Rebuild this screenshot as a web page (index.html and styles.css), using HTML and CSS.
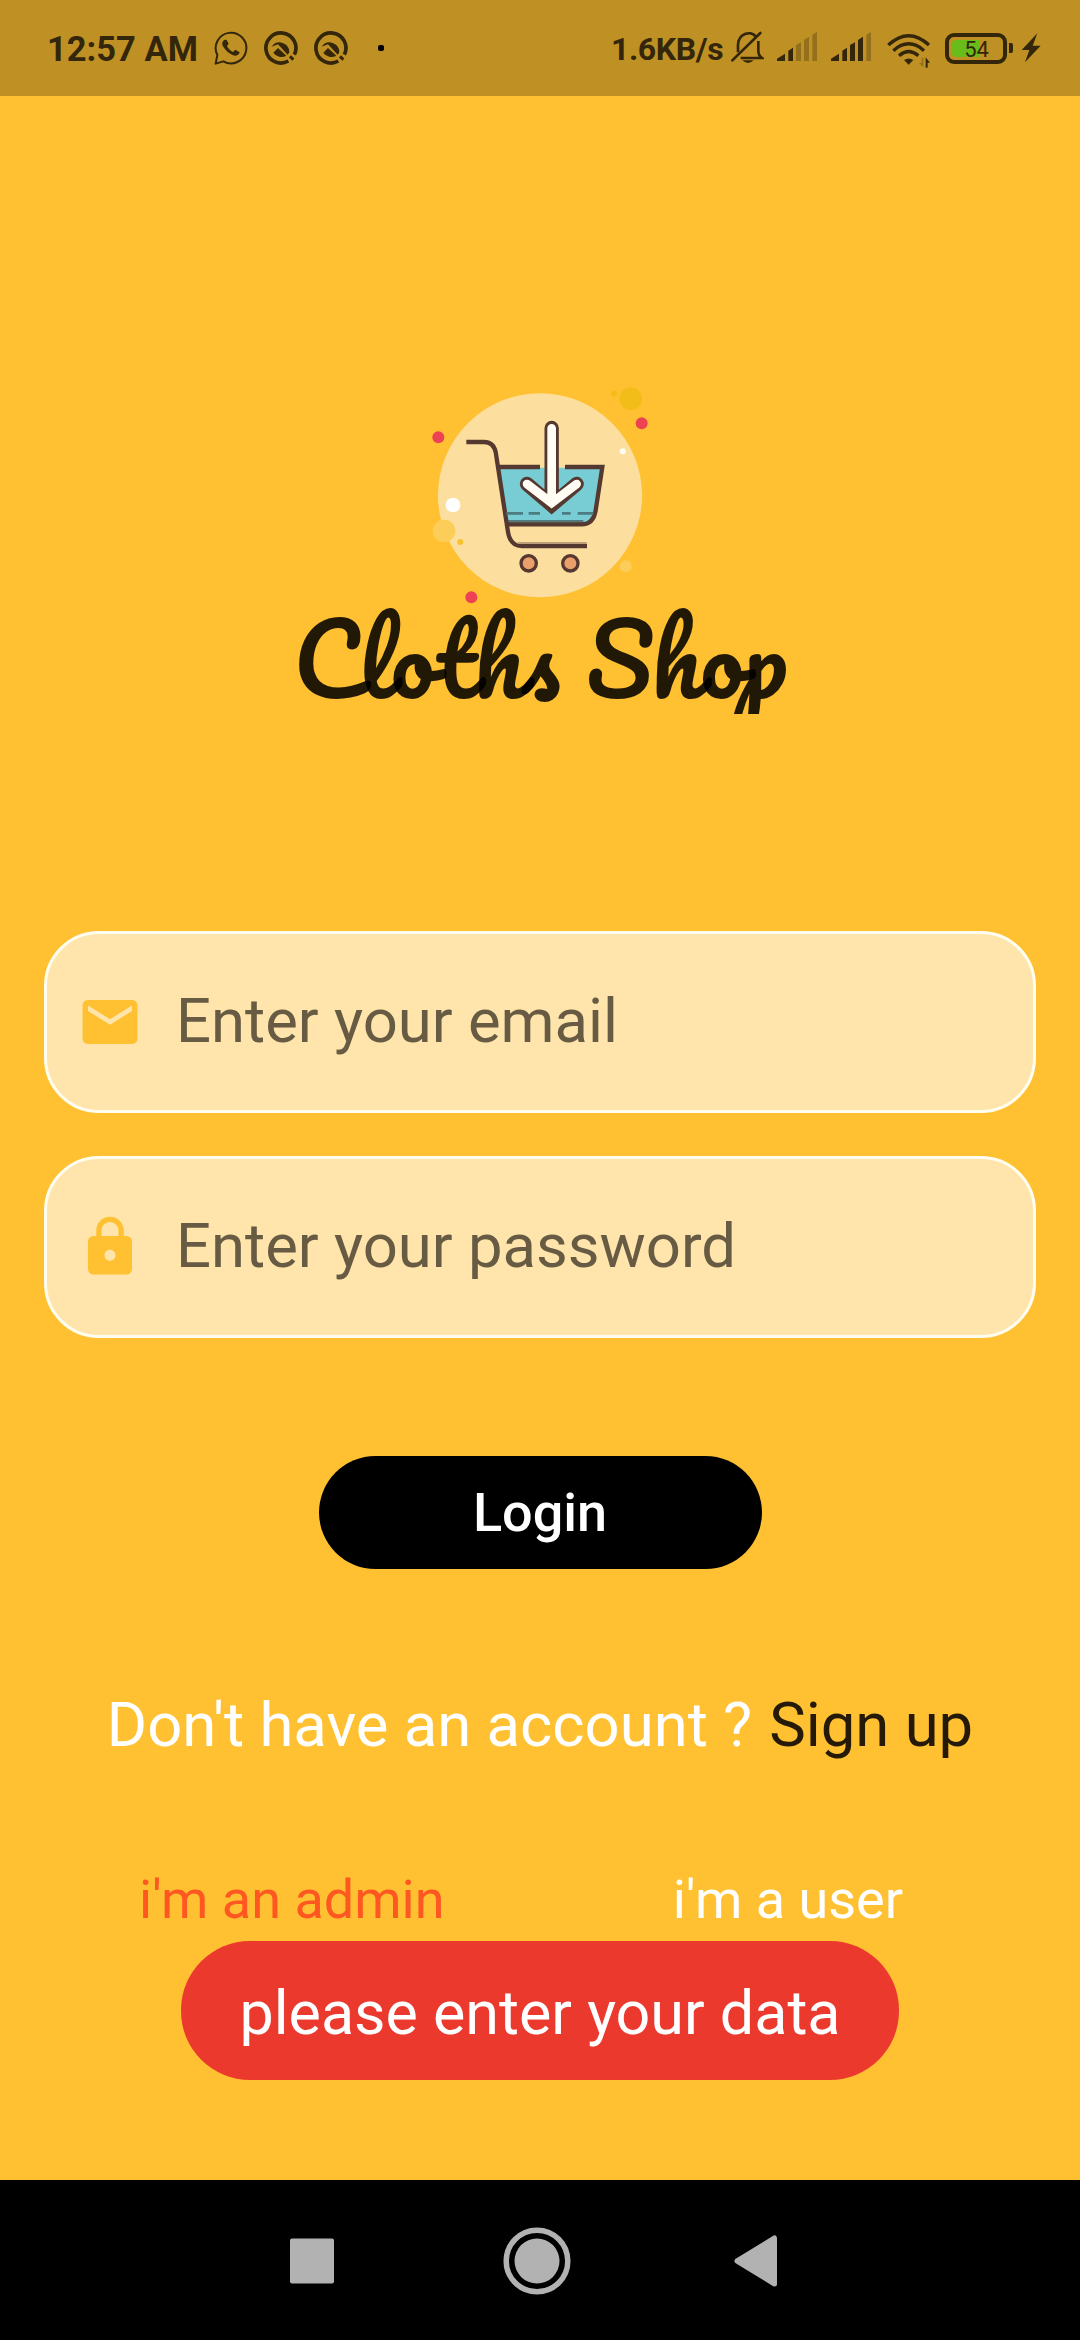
FILE: index.html
```html
<!DOCTYPE html>
<html lang="en">
<head>
<meta charset="utf-8">
<title>Cloths Shop</title>
<link rel="stylesheet" href="styles.css">
</head>
<body>
<div class="screen">
  <header class="status">
    <span class="clock">12:57 AM</span>
    <svg class="s-whatsapp" width="34" height="34" viewBox="0 0 102 102" fill="none" stroke="#33260a" stroke-width="6">
      <path d="M5 98L10 72A46 46 0 1 1 28 91Z" stroke-linejoin="round"/>
      <path d="M28 29C23 34 24 42 29 49C37 62 50 72 63 74C70 75 76 70 77 64L64 56L57 63C50 60 42 52 39 45L44 38L38 27C34 25 30 26 28 29Z" fill="#33260a" stroke="none"/>
    </svg>
    <svg class="s-app" width="34" height="34" viewBox="0 0 102 102" fill="none" stroke="#33260a">
      <path d="M73 90A45 45 0 1 1 91 71" stroke-width="11"/>
      <path d="M78 76L88 86" stroke-width="9"/>
      <path d="M23 47A29 29 0 0 1 76 64L71 71L42 40Z" fill="#33260a" stroke="none"/>
      <path d="M28 65L42 51L67 74A29 29 0 0 1 28 65Z" fill="#33260a" stroke="none"/>
    </svg>
    <svg class="s-app" width="34" height="34" viewBox="0 0 102 102" fill="none" stroke="#33260a">
      <path d="M73 90A45 45 0 1 1 91 71" stroke-width="11"/>
      <path d="M78 76L88 86" stroke-width="9"/>
      <path d="M23 47A29 29 0 0 1 76 64L71 71L42 40Z" fill="#33260a" stroke="none"/>
      <path d="M28 65L42 51L67 74A29 29 0 0 1 28 65Z" fill="#33260a" stroke="none"/>
    </svg>
    <i class="s-dot"></i>
    <span class="speed">1.6KB/s</span>
    <svg class="s-bell" width="34" height="34" viewBox="0 0 102 102" fill="none" stroke="#33260a" stroke-width="8">
      <path d="M7 88L91 6" stroke-linecap="round"/>
      <path d="M24 64V43C24 8 62 -3 77 16M85 30V60Q85 73 96 81H32"/>
      <path d="M37 88H71Q54 104 37 88Z" fill="#33260a" stroke="none"/>
    </svg>
    <svg class="s-signal" width="42" height="32" viewBox="0 0 126 96" fill="#33260a">
      <path d="M3 87V80L27 65V87ZM37 87V56L51 47V87Z"/>
      <path d="M60 87V39L75 31V87ZM84 87V24L99 14V87ZM109 87V8L123 0V87Z" opacity=".3"/>
    </svg>
    <svg class="s-signal2" width="42" height="32" viewBox="0 0 126 96" fill="#33260a">
      <path d="M3 87V80L27 65V87ZM37 87V56L51 47V87ZM60 87V39L75 31V87ZM84 87V24L99 14V87Z"/>
      <path d="M109 87V8L123 0V87Z" opacity=".3"/>
    </svg>
    <svg class="s-wifi" width="44" height="36" viewBox="0 0 132 108" fill="none" stroke="#33260a" stroke-width="10">
      <path d="M4 39Q65 -17 126 39M19 56Q65 15 111 56M36 71Q65 46 94 71"/>
      <path d="M51 84Q65 75 79 84L65 98Z" fill="#33260a" stroke="none"/>
      <path d="M116 107V76L129 92H122V107Z" fill="#33260a" stroke="none"/>
      <path d="M109 77V106L96 93H104V77Z" fill="#33260a" stroke="none" opacity=".3"/>
    </svg>
    <span class="battery"><b class="level"></b><span class="pct">54</span></span>
    <i class="tip"></i>
    <svg class="s-bolt" width="20" height="30" viewBox="0 0 60 90" fill="#33260a"><path d="M49 1L2 51H25L12 88L59 38H35Z"/></svg>
  </header>

  <main class="content">
    <svg class="logo" width="260" height="240" viewBox="0 0 780 720" fill="none">
      <circle cx="390" cy="376" r="306" fill="#fcdf9f"/>
      <circle cx="662" cy="86" r="34" fill="#f2bd18"/><circle cx="612" cy="71" r="9" fill="#f2bd18"/>
      <g fill="#ed4253"><circle cx="85" cy="202" r="18"/><circle cx="695" cy="160" r="18"/><circle cx="184" cy="682" r="18"/></g>
      <circle cx="638" cy="244" r="9" fill="#fffdf2"/><circle cx="129" cy="405" r="22" fill="#fff"/>
      <circle cx="102" cy="483" r="34" fill="#fccd58"/><circle cx="151" cy="516" r="9" fill="#f4c32f"/><circle cx="647" cy="589" r="18" fill="#fccd58"/>
      <path d="M266 293H577L556 425Q548 462 515 462H289Z" fill="#78cdd4"/>
      <path d="M290 454H520" stroke="#567b7c" stroke-width="8"/>
      <g stroke="#55382f" stroke-width="13">
        <path d="M169 216H222Q250 216 257 246L294 486Q301 528 335 528H531M266 291H390M465 291H577L557 421Q550 463 515 463H290"/>
      </g>
      <path d="M323 519H530" stroke="#bd9f79" stroke-width="6"/>
      <path d="M289 430H339M356 430H390M456 430H482M503 430H550" stroke="#4b7c81" stroke-width="8"/>
      <path d="M425 174V384M351 342L425 405L500 342" stroke="#55382f" stroke-width="43" stroke-linecap="round"/>
      <path d="M425 175V384M351 342L425 399L500 342" stroke="#fffdf4" stroke-width="26" stroke-linecap="round"/>
      <g fill="#eb9f6b" stroke="#55382f" stroke-width="10"><circle cx="356" cy="580" r="23"/><circle cx="481" cy="580" r="23"/></g>
    </svg>
    <h1 class="brand">Cloths Shop</h1>

    <div class="field">
      <svg width="66" height="66" viewBox="0 0 24 24" fill="#ffc132"><path d="M20 4H4c-1.100 0-1.990.9-1.990 2L2 18c0 1.100.9 2 2 2h16c1.100 0 2-.9 2-2V6c0-1.100-.9-2-2-2zm0 4l-8 5-8-5V6l8 5 8-5v2z"/></svg>
      <span class="hint">Enter your email</span>
    </div>
    <div class="field">
      <svg width="66" height="66" viewBox="0 0 24 24" fill="#ffc132"><path d="M18 8h-1V6c0-2.760-2.240-5-5-5S7 3.240 7 6v2H6c-1.100 0-2 .9-2 2v10c0 1.100.9 2 2 2h12c1.100 0 2-.9 2-2V10c0-1.100-.9-2-2-2zm-6 9c-1.100 0-2-.9-2-2s.9-2 2-2 2 .9 2 2-.9 2-2 2zm3.100-9H8.900V6c0-1.710 1.390-3.100 3.100-3.100 1.710 0 3.100 1.390 3.100 3.100v2z"/></svg>
      <span class="hint">Enter your password</span>
    </div>
    <button class="login">Login</button>
    <p class="signup"><span>Don't have an account ?</span><a>Sign up</a></p>
    <div class="roles"><span class="admin">i'm an admin</span><span>i'm a user</span></div>
    <div class="toast">please enter your data</div>
  </main>

  <nav class="nav">
    <svg width="44" height="46" viewBox="0 0 44 46" fill="#b2b2b2"><rect y="0.500" width="44" height="45" rx="2"/></svg>
    <svg width="68" height="68" viewBox="0 0 68 68" fill="#b2b2b2"><circle cx="34" cy="34" r="22.500"/><circle cx="34" cy="34" r="30.800" fill="none" stroke="#b2b2b2" stroke-width="5.500"/></svg>
    <svg width="44" height="54" viewBox="0 0 44 54" fill="#b2b2b2" stroke="#b2b2b2" stroke-width="5" stroke-linejoin="round"><path d="M3 27L40.500 4V50Z"/></svg>
  </nav>
</div>
</body>
</html>
```

FILE: styles.css
```css
* { box-sizing: border-box; margin: 0; padding: 0; }
body { font-family: Roboto, sans-serif; }
.screen { width: 1080px; height: 2340px; display: flex; flex-direction: column; background: #ffc132; overflow: hidden; }

.status { height: 96px; flex: none; display: flex; align-items: center; padding-left: 47px; background: #bf9124; color: #33260a; font-weight: 700; font-size: 34.500px; line-height: 40px; white-space: nowrap; }
.status svg { flex: none; }
.clock { width: 167px; flex: none; padding-top: 2px; }
.s-app { margin-left: 16px; }
.s-dot { width: 6px; height: 6px; border-radius: 2px; background: #000; margin-left: 30px; }
.speed { width: 119px; flex: none; margin-left: 227px; padding-top: 1px; font-size: 32px; letter-spacing: -0.400px; }
.s-signal { margin-left: 12px; }
.s-signal2 { margin-left: 12px; }
.s-wifi { margin-left: 15px; margin-top: 4px; }
.battery { position: relative; width: 62px; height: 31px; flex: none; border: 4px solid #33260a; border-radius: 9px; margin-left: 14px; display: flex; align-items: center; padding: 3px; }
.level { width: 27px; height: 17px; border-radius: 4px 0 0 4px; background: #68bd1b; }
.pct { position: absolute; left: 0; right: 0; top: 0; line-height: 25px; font-size: 22px; font-weight: 400; text-align: center; padding-left: 1px; }
.tip { width: 4px; height: 10px; border-radius: 0 2px 2px 0; background: #33260a; margin-left: 2px; }
.s-bolt { margin-left: 8px; }

.content { flex: 1; display: flex; flex-direction: column; align-items: center; padding: 274px 44px 0; }
.logo { flex: none; }
.brand { height: 109px; margin-top: -5px; margin-bottom: 217px; padding: 0 20px; overflow: hidden; font-family: Pacifico, cursive; font-size: 96.250px; font-weight: 400; line-height: 108px; color: rgba(0, 0, 0, .87); white-space: nowrap; }

.field { width: 992px; height: 182px; flex: none; display: flex; align-items: center; gap: 33px; padding-left: 30px; margin-bottom: 43px; border: 3px solid #fffdf0; border-radius: 55px; background: #ffe5ab; }
.hint { padding-bottom: 2px; font-size: 61.600px; line-height: 72px; color: #675b43; }
.login { width: 443px; height: 113px; flex: none; margin-top: 75px; border: 0; border-radius: 57px; background: #000; color: #fff; font: 500 54px/64px Roboto, sans-serif; }
.signup { display: flex; gap: 17px; margin-top: 120px; font-size: 61.600px; line-height: 72px; color: #fff; white-space: nowrap; }
.signup a { color: #251a07; }
.roles { align-self: stretch; display: flex; justify-content: space-between; margin-top: 107px; padding: 0 133px 0 95px; font-size: 54px; line-height: 64px; color: #fff; white-space: nowrap; }
.admin { color: #ff5722; }
.toast { width: 718px; height: 139px; flex: none; margin-top: 9px; padding-top: 6px; border-radius: 69px; background: #eb392e; color: #fff; font-size: 61px; line-height: 133px; text-align: center; white-space: nowrap; }

.nav { height: 160px; flex: none; display: flex; align-items: center; padding-left: 290px; padding-top: 2px; background: #000; }
.nav svg + svg { margin-left: 169px; }
.nav svg:last-child { margin-left: 163px; }
```
